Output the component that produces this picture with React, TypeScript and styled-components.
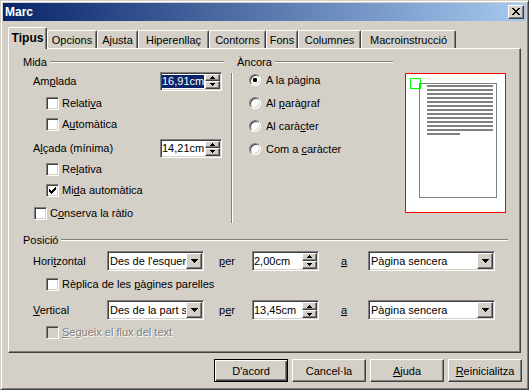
import React from 'react';
import styled, { createGlobalStyle, css } from 'styled-components';

const GlobalStyle = createGlobalStyle`
  html, body { margin: 0; padding: 0; background: #d4d0c8; }
  body { font-family: "Liberation Sans", Arial, sans-serif; font-size: 11px; color: #000; }
  * { box-sizing: border-box; }
`;

const raised = css`
  border: 1px solid;
  border-color: #fff #404040 #404040 #fff;
  box-shadow: inset -1px -1px 0 #808080;
  background: #d4d0c8;
`;

const sunken = css`
  border: 1px solid;
  border-color: #808080 #fff #fff #808080;
  box-shadow: inset 1px 1px 0 #404040, inset -1px -1px 0 #d4d0c8;
`;

const Window = styled.div`
  width: 529px;
  height: 390px;
  border: 1px solid;
  border-color: #d4d0c8 #404040 #404040 #d4d0c8;
  box-shadow: inset 1px 1px 0 #fff, inset -1px -1px 0 #808080;
  padding: 2px;
  display: flex;
  flex-direction: column;
  background: #d4d0c8;
  font-family: "Liberation Sans", Arial, sans-serif;
  font-size: 11px;
`;

const TitleBar = styled.div`
  height: 18px;
  flex: none;
  display: flex;
  align-items: center;
  justify-content: space-between;
  padding: 0 2px 0 2px;
  background: linear-gradient(to right, #0a246a, #a6caf0);
`;

const Title = styled.span`
  color: #fff;
  font-weight: bold;
  font-size: 12px;
`;

const CloseButton = styled.div`
  ${raised};
  width: 16px;
  height: 14px;
  display: flex;
  align-items: center;
  justify-content: center;
  padding: 0 0 1px 0;
`;

const Body = styled.div`
  flex: 1;
  display: flex;
  flex-direction: column;
  padding: 6px 5px 5px 5px;
`;

const TabStrip = styled.div`
  display: flex;
  align-items: flex-end;
  height: 22px;
  margin-bottom: -1px;
  position: relative;
  z-index: 1;
`;

const Tab = styled.div<{ $w: number; $active?: boolean }>`
  width: ${(p) => p.$w}px;
  height: ${(p) => (p.$active ? 22 : 18)}px;
  margin-bottom: ${(p) => (p.$active ? 0 : 1)}px;
  background: #d4d0c8;
  border-left: 1px solid #fff;
  border-top: 1px solid #fff;
  border-right: 1px solid #404040;
  box-shadow: inset -1px 0 0 #808080;
  border-radius: 2px 2px 0 0;
  display: flex;
  align-items: center;
  justify-content: center;
  white-space: nowrap;
  padding-bottom: ${(p) => (p.$active ? 2 : 0)}px;
  font-weight: ${(p) => (p.$active ? 'bold' : 'normal')};
  font-size: ${(p) => (p.$active ? 12 : 11)}px;
`;

const Panel = styled.div`
  height: 305px;
  flex: none;
  border: 1px solid;
  border-color: #fff #404040 #404040 #fff;
  box-shadow: inset -1px -1px 0 #808080;
  padding: 6px 0 0 14px;
  display: flex;
  flex-direction: column;
`;

const TopSection = styled.div`
  display: flex;
  height: 169px;
`;

const LeftGroup = styled.div`
  width: 201px;
  display: flex;
  flex-direction: column;
`;

const FixedLine = styled.div<{ $h?: number; $w?: number; $ml?: number }>`
  display: flex;
  align-items: center;
  gap: 3px;
  height: ${(p) => p.$h ?? 13}px;
  ${(p) => (p.$w ? `width: ${p.$w}px;` : '')}
  margin-left: ${(p) => p.$ml ?? 0}px;
  white-space: nowrap;
`;

const Rule = styled.span`
  flex: 1;
  height: 2px;
  border-top: 1px solid #808080;
  border-bottom: 1px solid #fff;
`;

const Row = styled.div<{ $h: number; $indent?: number }>`
  height: ${(p) => p.$h}px;
  display: flex;
  align-items: center;
  padding-left: ${(p) => p.$indent ?? 0}px;
  white-space: nowrap;
`;

const CheckBox = styled.span<{ $disabled?: boolean }>`
  ${sunken};
  width: 13px;
  height: 13px;
  flex: none;
  background: ${(p) => (p.$disabled ? '#d4d0c8' : '#fff')};
  display: flex;
  align-items: center;
  justify-content: center;
  margin-right: 3px;
`;

const Label = styled.span<{ $disabled?: boolean }>`
  color: ${(p) => (p.$disabled ? '#808080' : '#000')};
  ${(p) => (p.$disabled ? 'text-shadow: 1px 1px 0 #fff;' : '')}
`;

const SpinField = styled.div<{ $w: number; $h: number; $ml?: string; $mr?: number }>`
  ${sunken};
  width: ${(p) => p.$w}px;
  height: ${(p) => p.$h}px;
  flex: none;
  background: #fff;
  display: flex;
  padding: 1px;
  margin-left: ${(p) => p.$ml ?? '0'};
  margin-right: ${(p) => p.$mr ?? 0}px;
`;

const FieldText = styled.span<{ $pad?: number }>`
  flex: 1;
  overflow: hidden;
  white-space: nowrap;
  display: flex;
  align-items: center;
  padding-left: ${(p) => p.$pad ?? 1}px;
`;

const Selected = styled.span`
  background: #0a246a;
  color: #fff;
  line-height: 13px;
`;

const SpinButtons = styled.div`
  width: 15px;
  display: flex;
  flex-direction: column;
  flex: none;
`;

const SpinHalf = styled.div`
  ${raised};
  flex: 1;
  display: flex;
  align-items: center;
  justify-content: center;
`;

const DropButton = styled.div`
  ${raised};
  width: 16px;
  flex: none;
  display: flex;
  align-items: center;
  justify-content: center;
`;

const RightArea = styled.div`
  flex: 1;
  display: flex;
  flex-direction: column;
`;

const AnchorBody = styled.div`
  display: flex;
`;

const VSeparator = styled.div`
  width: 2px;
  height: 150px;
  margin: 5px 0 0 7px;
  border-left: 1px solid #808080;
  border-right: 1px solid #fff;
`;

const RadioList = styled.div`
  width: 156px;
  margin-left: 16px;
  display: flex;
  flex-direction: column;
`;

const RadioCircle = styled.span`
  width: 12px;
  height: 12px;
  flex: none;
  border-radius: 50%;
  border: 1px solid;
  border-color: #808080 #fff #fff #808080;
  box-shadow: inset 1px 1px 0 #404040, inset -1px -1px 0 #d4d0c8;
  background: #fff;
  display: flex;
  align-items: center;
  justify-content: center;
  margin-right: 5px;
`;

const RadioDot = styled.span`
  width: 4px;
  height: 4px;
  border-radius: 1px;
  background: #000;
`;

const PreviewBox = styled.div`
  margin-top: 5px;
  width: 101px;
  height: 140px;
  flex: none;
`;

const PosSection = styled.div`
  margin-top: 9px;
  display: flex;
  flex-direction: column;
`;

const FieldLabel = styled.span<{ $w: number; $ml?: number }>`
  width: ${(p) => p.$w}px;
  margin-left: ${(p) => p.$ml ?? 0}px;
  flex: none;
`;

const Combo = styled.div<{ $w: number }>`
  ${sunken};
  width: ${(p) => p.$w}px;
  height: 20px;
  flex: none;
  background: #fff;
  display: flex;
  padding: 1px;
`;

const ButtonRow = styled.div`
  display: flex;
  justify-content: flex-end;
  gap: 4px;
  margin: 6px -1px 0 0;
`;

const Button = styled.div<{ $default?: boolean }>`
  width: 74px;
  height: 23px;
  display: flex;
  align-items: center;
  justify-content: center;
  background: #d4d0c8;
  ${(p) =>
    p.$default
      ? css`
          border: 1px solid #000;
          box-shadow: inset 1px 1px 0 #fff, inset -1px -1px 0 #404040, inset -2px -2px 0 #808080;
        `
      : css`
          border: 1px solid;
          border-color: #fff #404040 #404040 #fff;
          box-shadow: inset -1px -1px 0 #808080;
        `}
`;

const Check = () => (
  <svg width="7" height="7" viewBox="0 0 7 7" shapeRendering="crispEdges">
    <path
      d="M6 0h1v3h-1v1h-1v1h-1v1h-1v1h-1v-1h-1v-1h-1v-3h1v1h1v1h1v-1h1v-1h1v-1h1z"
      fill="#000"
    />
  </svg>
);

const DownArrow = () => (
  <svg width="7" height="4" viewBox="0 0 7 4" shapeRendering="crispEdges">
    <path d="M0 0h7v1h-1v1h-1v1h-1v1h-1v-1h-1v-1h-1v-1h-1z" fill="#000" />
  </svg>
);

const TinyArrow = ({ up }: { up?: boolean }) => (
  <svg width="5" height="3" viewBox="0 0 5 3" shapeRendering="crispEdges">
    {up ? (
      <path d="M2 0h1v1h1v1h1v1h-5v-1h1v-1h1z" fill="#000" />
    ) : (
      <path d="M0 0h5v1h-1v1h-1v1h-1v-1h-1v-1h-1z" fill="#000" />
    )}
  </svg>
);

const CloseGlyph = () => (
  <svg width="8" height="7" viewBox="0 0 8 7" shapeRendering="crispEdges">
    <path
      d="M0 0h2v1h1v1h2v-1h1v-1h2v1h-1v1h-1v1h-1v1h1v1h1v1h1v1h-2v-1h-1v-1h-2v1h-1v1h-2v-1h1v-1h1v-1h1v-1h-1v-1h-1v-1h-1z"
      fill="#000"
    />
  </svg>
);

const Spin = ({ value, w, h, selected, ml, mr }: { value: string; w: number; h: number; selected?: boolean; ml?: string; mr?: number }) => (
  <SpinField $w={w} $h={h} $ml={ml} $mr={mr}>
    <FieldText $pad={0}>{selected ? <Selected>{value}</Selected> : value}</FieldText>
    <SpinButtons>
      <SpinHalf>
        <TinyArrow up />
      </SpinHalf>
      <SpinHalf>
        <TinyArrow />
      </SpinHalf>
    </SpinButtons>
  </SpinField>
);

const Dropdown = ({ value, w }: { value: string; w: number }) => (
  <Combo $w={w}>
    <FieldText>{value}</FieldText>
    <DropButton>
      <DownArrow />
    </DropButton>
  </Combo>
);

const CheckRow = ({
  h,
  indent,
  checked,
  disabled,
  children,
}: {
  h: number;
  indent: number;
  checked?: boolean;
  disabled?: boolean;
  children: React.ReactNode;
}) => (
  <Row $h={h} $indent={indent}>
    <CheckBox $disabled={disabled}>{checked && <Check />}</CheckBox>
    <Label $disabled={disabled}>{children}</Label>
  </Row>
);

const RadioRow = ({ checked, children }: { checked?: boolean; children: React.ReactNode }) => (
  <Row $h={23}>
    <RadioCircle>{checked && <RadioDot />}</RadioCircle>
    <Label>{children}</Label>
  </Row>
);

const PagePreview = () => {
  const lines = Array.from({ length: 12 }, (_, i) => 12 + i * 4);
  return (
    <PreviewBox>
      <svg width="101" height="140" viewBox="0 0 101 140" shapeRendering="crispEdges">
        <rect x="0.5" y="0.5" width="100" height="139" fill="#fff" stroke="#ff0000" />
        <rect x="14.5" y="10.5" width="77" height="114" fill="#fff" stroke="#808080" />
        {lines.map((y) => (
          <rect key={y} x="22" y={y} width="66" height="2" fill="#808080" />
        ))}
        <rect x="22" y="60" width="33" height="2" fill="#808080" />
        <rect x="5.5" y="5.5" width="10" height="10" fill="none" stroke="#00ff00" />
      </svg>
    </PreviewBox>
  );
};

const tabs: { label: string; w: number }[] = [
  { label: 'Tipus', w: 39 },
  { label: 'Opcions', w: 50 },
  { label: 'Ajusta', w: 41 },
  { label: 'Hiperenllaç', w: 71 },
  { label: 'Contorns', w: 57 },
  { label: 'Fons', w: 32 },
  { label: 'Columnes', w: 63 },
  { label: 'Macroinstrucció', w: 95 },
];

export default function App() {
  return (
    <>
      <GlobalStyle />
      <Window>
        <TitleBar>
          <Title>Marc</Title>
          <CloseButton>
            <CloseGlyph />
          </CloseButton>
        </TitleBar>
        <Body>
          <TabStrip>
            {tabs.map((t, i) => (
              <Tab key={t.label} $w={t.w} $active={i === 0}>
                {t.label}
              </Tab>
            ))}
          </TabStrip>
          <Panel>
            <TopSection>
              <LeftGroup>
                <FixedLine>
                  <span>Mida</span>
                  <Rule />
                </FixedLine>
                <Row $h={26} $indent={10}>
                  <Label>
                    Am<u>p</u>lada
                  </Label>
                  <Spin value="16,91cm" w={62} h={19} selected ml="auto" mr={2} />
                </Row>
                <CheckRow h={18} indent={23}>
                  Relati<u>v</u>a
                </CheckRow>
                <CheckRow h={24} indent={23}>
                  A<u>u</u>tomàtica
                </CheckRow>
                <Row $h={24} $indent={10}>
                  <Label>
                    A<u>l</u>çada (mínima)
                  </Label>
                  <Spin value="14,21cm" w={62} h={19} ml="auto" mr={2} />
                </Row>
                <CheckRow h={18} indent={23}>
                  Re<u>l</u>ativa
                </CheckRow>
                <CheckRow h={24} indent={23} checked>
                  Mi<u>d</u>a automàtica
                </CheckRow>
                <CheckRow h={22} indent={11}>
                  C<u>o</u>nserva la ràtio
                </CheckRow>
              </LeftGroup>
              <RightArea>
                <FixedLine $w={156} $ml={13}>
                  <span>Àncora</span>
                  <Rule />
                </FixedLine>
                <AnchorBody>
                  <VSeparator />
                  <RadioList>
                    <RadioRow checked>A la pàgina</RadioRow>
                    <RadioRow>
                      Al <u>p</u>aràgraf
                    </RadioRow>
                    <RadioRow>
                      Al carà<u>c</u>ter
                    </RadioRow>
                    <RadioRow>
                      Com a <u>c</u>aràcter
                    </RadioRow>
                  </RadioList>
                  <PagePreview />
                </AnchorBody>
              </RightArea>
            </TopSection>
            <PosSection>
              <FixedLine $h={14} $w={485}>
                <span>Posició</span>
                <Rule />
              </FixedLine>
              <Row $h={27} $indent={10}>
                <FieldLabel $w={74}>
                  Hori<u>t</u>zontal
                </FieldLabel>
                <Dropdown value="Des de l'esquerra" w={97} />
                <FieldLabel $w={33} $ml={15}>
                  <u>p</u>er
                </FieldLabel>
                <Spin value="2,00cm" w={67} h={20} />
                <FieldLabel $w={27} $ml={22}>
                  <u>a</u>
                </FieldLabel>
                <Dropdown value="Pàgina sencera" w={127} />
              </Row>
              <CheckRow h={20} indent={23}>
                Rèplica de les <u>p</u>àgines parelles
              </CheckRow>
              <Row $h={32} $indent={10}>
                <FieldLabel $w={74}>
                  <u>V</u>ertical
                </FieldLabel>
                <Dropdown value="Des de la part superior" w={97} />
                <FieldLabel $w={33} $ml={15}>
                  p<u>e</u>r
                </FieldLabel>
                <Spin value="13,45cm" w={67} h={20} />
                <FieldLabel $w={27} $ml={22}>
                  <u>a</u>
                </FieldLabel>
                <Dropdown value="Pàgina sencera" w={127} />
              </Row>
              <CheckRow h={12} indent={23} disabled>
                <u>S</u>egueix el flux del text
              </CheckRow>
            </PosSection>
          </Panel>
          <ButtonRow>
            <Button $default>D'acord</Button>
            <Button>Cancel·la</Button>
            <Button>
              <u>A</u>juda
            </Button>
            <Button>
              <u>R</u>einicialitza
            </Button>
          </ButtonRow>
        </Body>
      </Window>
    </>
  );
}
